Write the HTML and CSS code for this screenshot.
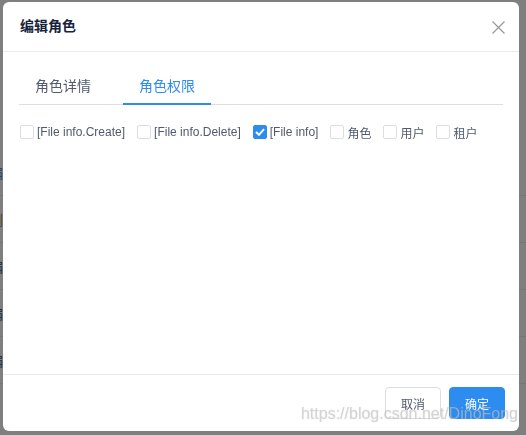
FILE: index.html
```html
<!DOCTYPE html>
<html lang="zh-CN">
<head>
<meta charset="utf-8">
<title>编辑角色</title>
<link rel="stylesheet" href="styles.css">
</head>
<body>
<div class="page">
  <div class="bg-row"><span class="bg-text bg-blue">编辑</span></div>
  <div class="bg-row"><span class="bg-text bg-orange">删除</span></div>
  <div class="bg-row"><span class="bg-text">编辑</span></div>
  <div class="bg-row"><span class="bg-text">编辑</span></div>
  <div class="bg-row"><span class="bg-text">编辑</span></div>
</div>
<div class="mask"></div>
<div class="modal">
  <div class="modal-header">
    <span class="modal-title">编辑角色</span>
    <span class="modal-close">
      <svg width="13" height="13" viewBox="0 0 13 13"><path d="M0.5 0.5 L12.5 12.5 M12.5 0.5 L0.5 12.5" stroke="#999" stroke-width="1.2" fill="none"/></svg>
    </span>
  </div>
  <div class="modal-body">
    <div class="tabs">
      <div class="tab">角色详情</div>
      <div class="tab tab-active">角色权限</div>
    </div>
    <div class="checks">
      <label class="check"><span class="box"></span><span>[File info.Create]</span></label>
      <label class="check"><span class="box"></span><span>[File info.Delete]</span></label>
      <label class="check"><span class="box box-on"><svg width="10" height="8" viewBox="0 0 10 8"><path d="M1 4 L4 6.8 L9 1.2" stroke="#fff" stroke-width="2" fill="none"/></svg></span><span>[File info]</span></label>
      <label class="check"><span class="box"></span><span>角色</span></label>
      <label class="check"><span class="box"></span><span>用户</span></label>
      <label class="check"><span class="box"></span><span>租户</span></label>
    </div>
  </div>
  <div class="modal-footer">
    <button class="btn">取消</button>
    <button class="btn btn-primary">确定</button>
  </div>
</div>
<div class="watermark">https://blog.csdn.net/DinoFong</div>
</body>
</html>
```
FILE: styles.css
```css
html, body {
  margin: 0;
  padding: 0;
}
body {
  width: 526px;
  height: 435px;
  overflow: hidden;
  background: #fff;
  font-family: "Liberation Sans", "Noto Sans CJK SC", sans-serif;
}
.page {
  padding-top: 149px;
}
.bg-row {
  height: 46px;
  border-bottom: 1px solid #e8eaec;
  display: flex;
  align-items: center;
}
.bg-text {
  margin-left: -11px;
  font-size: 14px;
  color: #515a6e;
}
.bg-blue { color: #5a7fb0; }
.bg-orange { color: #b08a50; }
.mask {
  position: fixed;
  left: 0;
  top: 0;
  right: 0;
  bottom: 0;
  background: rgba(0, 0, 0, 0.5);
}
.modal {
  position: absolute;
  left: 3px;
  top: 2px;
  width: 516px;
  height: 429px;
  background: #fff;
  border-radius: 6px;
  display: flex;
  flex-direction: column;
}
.modal-header {
  padding: 14px 14px 14px 17px;
  border-bottom: 1px solid #e8eaec;
  display: flex;
  align-items: center;
  justify-content: space-between;
}
.modal-title {
  font-size: 14px;
  line-height: 21px;
  font-weight: bold;
  color: #17233c;
}
.modal-close {
  display: flex;
  margin-top: 1px;
}
.modal-body {
  flex: 1;
  padding: 17px 16px 16px;
}
.tabs {
  display: flex;
  border-bottom: 1px solid #dcdee2;
  margin-bottom: 17px;
}
.tab {
  position: relative;
  padding: 7px 16px 8px;
  margin-right: 16px;
  font-size: 14px;
  line-height: 20px;
  color: #515a6e;
}
.tab-active {
  color: #2d8cf0;
}
.tab-active::after {
  content: "";
  position: absolute;
  left: 0;
  right: 0;
  bottom: -1px;
  height: 2px;
  background: #2d8cf0;
}
.checks {
  display: flex;
  align-items: center;
  padding-left: 1px;
  height: 20px;
}
.check {
  display: flex;
  align-items: center;
  gap: 3px;
  margin-right: 12px;
  font-size: 12px;
  color: #515a6e;
}
.box {
  width: 12px;
  height: 12px;
  border: 1px solid #dcdee2;
  border-radius: 2px;
  background: #fff;
  display: flex;
  align-items: center;
  justify-content: center;
}
.box-on {
  background: #2d8cf0;
  border-color: #2d8cf0;
}
.modal-footer {
  border-top: 1px solid #e8eaec;
  padding: 12px 14px;
  display: flex;
  justify-content: flex-end;
  gap: 8px;
}
.btn {
  height: 32px;
  width: 56px;
  padding: 0;
  font-size: 12px;
  font-family: "Liberation Sans", "Noto Sans CJK SC", sans-serif;
  color: #515a6e;
  background: #fff;
  border: 1px solid #dcdee2;
  border-radius: 4px;
}
.btn-primary {
  color: #fff;
  background: #2d8cf0;
  border-color: #2d8cf0;
}
.watermark {
  position: absolute;
  right: 8px;
  top: 405px;
  font-size: 16px;
  line-height: 18px;
  color: rgba(205, 205, 205, 0.55);
  text-shadow: 0 0 1px rgba(120, 120, 120, 0.3);
  white-space: nowrap;
}
```
